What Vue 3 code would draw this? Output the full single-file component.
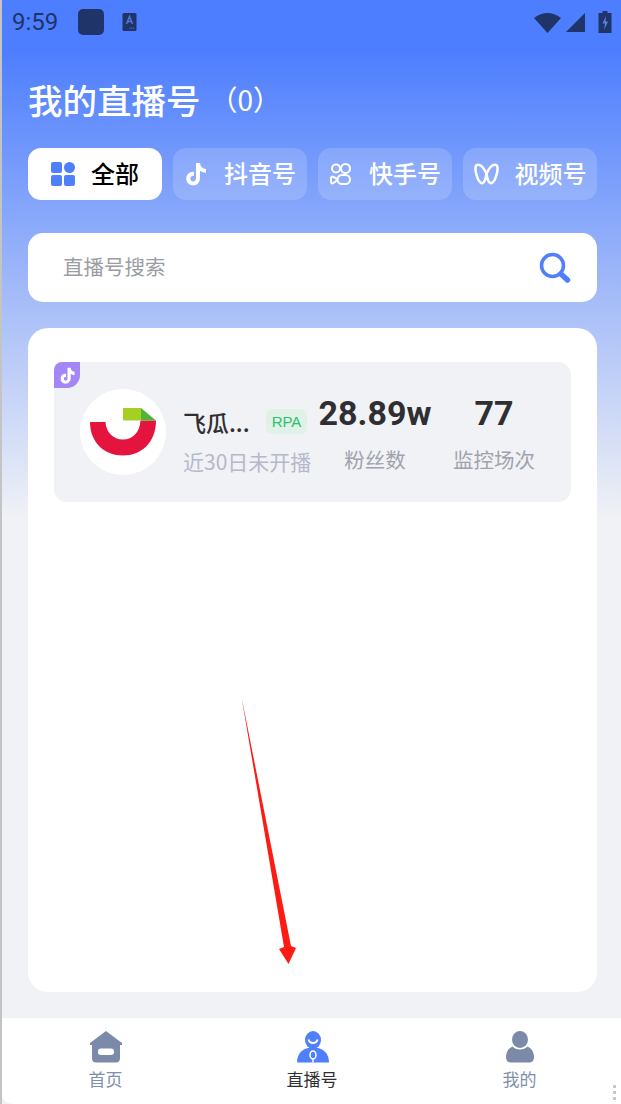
<template>
  <div class="page">
    <div class="status-bar">
      <span class="clock">9:59</span>
      <span class="app-dot"></span>
      <svg class="ime" viewBox="0 0 14 18" width="15" height="18">
        <rect width="14" height="18" rx="1.5" fill="#1f3468" />
        <path d="M4 11 L7 3.5 L10 11 M5.2 8.500 H8.800" fill="none" stroke="#4f78d8" stroke-width="1.500" />
        <path d="M7 15.200 H12" stroke="#4f78d8" stroke-width="1" stroke-dasharray="1 .8" />
      </svg>
      <div class="status-right">
        <svg class="wifi" viewBox="0 0 27 21" width="27" height="21">
          <path d="M0 6 Q13.500 -4 27 6 L13.500 21 Z" fill="#1f3468" />
        </svg>
        <svg class="signal" viewBox="0 0 19 19" width="19" height="19">
          <path d="M19 0 V19 H0 Z" fill="#1f3468" />
        </svg>
        <svg class="battery" viewBox="0 0 13 22" width="14" height="22">
          <path d="M4 2 V0 H9 V2 H13 V22 H0 V2 Z" fill="#1f3468" />
          <path d="M7.500 5 L4 12.500 H6.500 L5.500 19 L9.500 10.500 H7 Z" fill="#5a82e0" />
        </svg>
      </div>
    </div>

    <div class="title-row">
      <h1>我的直播号</h1>
      <span class="count">（0）</span>
    </div>

    <div class="tabs">
      <div
        v-for="tab in tabs"
        :key="tab.name"
        class="tab"
        :class="{ active: tab.active }"
      >
        <svg v-if="tab.icon === 'all'" viewBox="0 0 24 24" width="24" height="24">
          <rect width="11" height="11" rx="2" fill="#4f7ffb" />
          <circle cx="18.500" cy="5.500" r="5.500" fill="#4f7ffb" />
          <rect y="13" width="11" height="11" rx="2" fill="#4f7ffb" />
          <rect x="13" y="13" width="11" height="11" rx="2" fill="#4f7ffb" />
        </svg>
        <svg v-else-if="tab.icon === 'douyin'" viewBox="0 0 24 24" width="24" height="24">
          <path d="M12 1 H16 C16.300 4.800 18.500 6.800 22 7 V10.800 C19.700 10.700 17.800 10 16 8.800 V16 C16 20.500 13 23.500 9.300 23.500 C5.300 23.500 2.300 20.300 2.300 16.500 C2.300 12.300 5.800 9.300 10 9.700 V13.800 C8 13.400 6.300 14.700 6.300 16.500 C6.300 18.200 7.700 19.500 9.300 19.500 C10.900 19.500 12 18.200 12 16.300 Z" fill="#fff" />
        </svg>
        <svg v-else-if="tab.icon === 'kuaishou'" viewBox="0 0 24 24" width="24" height="24">
          <g fill="none" stroke="#fff" stroke-width="2">
            <circle cx="7" cy="6.500" r="4" />
            <circle cx="16.500" cy="6.500" r="4.500" />
            <rect x="8.500" y="13" width="12.500" height="9" rx="4.500" />
            <path d="M8.500 17.500 L4.500 14.800 C3 14 2 15 2 16.500 V19.500 C2 21 3 22 4.500 21 L8.500 18" stroke-linejoin="round" />
          </g>
        </svg>
        <svg v-else viewBox="0 0 26 24" width="25" height="24">
          <path d="M13 12 C10.500 6 7 2.500 4 2.500 C1.500 2.500 1 6 2 10.500 C3.300 16.500 5.800 21.500 8.500 21.500 C10.500 21.500 12 17.500 13 12 C14 17.500 15.500 21.500 17.500 21.500 C20.200 21.500 22.700 16.500 24 10.500 C25 6 24.500 2.500 22 2.500 C19 2.500 15.500 6 13 12 Z" fill="none" stroke="#fff" stroke-width="2.600" />
        </svg>
        <span>{{ tab.name }}</span>
      </div>
    </div>

    <div class="search">
      <span>直播号搜索</span>
      <svg viewBox="0 0 32 32" width="32" height="32">
        <circle cx="13.500" cy="13.500" r="11" fill="none" stroke="#4f7ffb" stroke-width="3.500" />
        <path d="M22 22 L28.500 28" stroke="#4f7ffb" stroke-width="5.500" stroke-linecap="round" />
      </svg>
    </div>

    <div class="panel">
      <div class="account">
        <div class="corner">
          <svg viewBox="0 0 24 24" width="17" height="17">
            <path d="M12 1 H16.500 C16.800 4.800 18.800 6.600 22 6.800 V11.200 C19.700 11.100 18 10.500 16.500 9.400 V16 C16.500 20.500 13.300 23.500 9.300 23.500 C5.300 23.500 2.300 20.300 2.300 16.500 C2.300 12.300 5.800 9.300 10 9.700 V14.200 C8.100 13.700 6.800 15 6.800 16.500 C6.800 18 8 19.200 9.400 19.200 C10.900 19.200 12 18 12 16.300 Z" fill="#fff" />
          </svg>
        </div>
        <div class="avatar">
          <svg viewBox="0 0 66 48" width="66" height="48">
            <path d="M0 14 H15.500 C16 24 23 31.500 33 31.500 C43 31.500 50 24 50.500 12.500 L66 12.500 C66 35 51 47.500 33 47.500 C15 47.500 0 35 0 14 Z" fill="#e5143f" />
            <rect x="33" y="0" width="18" height="12.500" fill="#a6cf24" />
            <path d="M51 0 L66 12.500 H51 Z" fill="#52b33a" />
          </svg>
        </div>
        <div class="info">
          <div class="name-row">
            <span class="name">飞瓜...</span>
            <span class="rpa">RPA</span>
          </div>
          <div class="sub">近30日未开播</div>
        </div>
        <div class="stat fans">
          <strong>28.89w</strong>
          <span>粉丝数</span>
        </div>
        <div class="stat watch">
          <strong>77</strong>
          <span>监控场次</span>
        </div>
      </div>
      <svg class="arrow" viewBox="0 0 60 275" width="60" height="275">
        <path d="M0.500 1 L50 250 L55 252 L47.500 268 L38 253 L43 251 Z" fill="#fc1c14" />
      </svg>
    </div>

    <nav class="tabbar">
      <div v-for="item in nav" :key="item.name" class="nav-item" :class="[item.icon, { current: item.current }]">
        <svg v-if="item.icon === 'home'" viewBox="0 0 32 32" width="32" height="32">
          <path d="M16 0 L32 12 V14 H30 V27 C30 30 28.500 31.500 26 31.500 H6 C3.500 31.500 2 30 2 27 V14 H0 V12 Z" fill="#7a8aa8" />
          <rect x="8" y="17.500" width="16" height="6.500" rx="3" fill="#fff" />
        </svg>
        <svg v-else-if="item.icon === 'live'" viewBox="0 0 32 32" width="32" height="32">
          <ellipse cx="16" cy="9" rx="8" ry="9" fill="#4f7ffb" />
          <path d="M11.500 8.500 C12.500 13 19.500 13 20.500 8.500" fill="none" stroke="#fff" stroke-width="2" />
          <path d="M0 31.500 C0 22 6 16.500 16 16.500 C26 16.500 32 22 32 31.500 Z" fill="#4f7ffb" />
          <ellipse cx="16" cy="24" rx="3" ry="4" fill="none" stroke="#fff" stroke-width="1.500" />
          <path d="M16 28 V31.500" stroke="#fff" stroke-width="1.500" />
        </svg>
        <svg v-else viewBox="0 0 32 32" width="32" height="32">
          <ellipse cx="16" cy="8.500" rx="8" ry="8.500" fill="#7a8aa8" />
          <path d="M2 26 C2 20.500 5 17 8.500 15.500 C12 19.500 20 19.500 23.500 15.500 C27 17 30 20.500 30 26 C30 30 28 31.500 25 31.500 H7 C4 31.500 2 30 2 26 Z" fill="#7a8aa8" />
        </svg>
        <span>{{ item.name }}</span>
      </div>
      <div class="handle">
        <i></i><i></i><i></i>
      </div>
    </nav>
  </div>
</template>

<script setup>
const tabs = [
  { name: '全部', icon: 'all', active: true },
  { name: '抖音号', icon: 'douyin' },
  { name: '快手号', icon: 'kuaishou' },
  { name: '视频号', icon: 'video' }
]

const nav = [
  { name: '首页', icon: 'home' },
  { name: '直播号', icon: 'live', current: true },
  { name: '我的', icon: 'me' }
]
</script>

<style>
html,
body {
  margin: 0;
  background: #f1f2f5;
}
</style>

<style scoped>
.page {
  width: 621px;
  height: 1104px;
  box-sizing: border-box;
  display: flex;
  flex-direction: column;
  overflow: hidden;
  font-family: "Noto Sans CJK SC", "Liberation Sans", sans-serif;
  background: linear-gradient(180deg, #4d7eff 0, #4d7eff 50px, #a9bff8 310px, #f1f2f5 520px);
  border-left: 2px solid #c4c4c4;
}

.status-bar {
  height: 44px;
  display: flex;
  align-items: center;
  padding: 0 9px 0 10px;
  color: #1f3468;
}

.clock {
  font-family: Roboto, sans-serif;
  font-size: 24px;
  width: 66px;
}

.app-dot {
  width: 26px;
  height: 26px;
  margin: 0 18px 0 0;
  border-radius: 5px;
  background: #1f3468;
}

.status-right {
  margin-left: auto;
  display: flex;
  align-items: center;
  gap: 5px;
}

.battery {
  margin-left: 8px;
}

.title-row {
  display: flex;
  align-items: center;
  margin: 28px 0 0 26px;
  height: 50px;
  padding-top: 4px;
  box-sizing: border-box;
  color: #fff;
}

h1 {
  margin: 0;
  font-size: 34.500px;
  font-weight: 500;
  line-height: 46px;
}

.count {
  font-size: 28px;
  margin-left: 9px;
}

.tabs {
  display: flex;
  gap: 11px;
  margin: 26px 24px 0 26px;
}

.tab {
  width: 134px;
  height: 52px;
  box-sizing: border-box;
  border-radius: 13px;
  display: flex;
  align-items: center;
  justify-content: center;
  gap: 16px;
  font-size: 24px;
  font-weight: 500;
  color: #fff;
  background: rgba(255, 255, 255, 0.16);
}

.tab span {
  padding-bottom: 4px;
}

.tab.active {
  background: #fff;
  color: #000;
}

.search {
  height: 69px;
  box-sizing: border-box;
  margin: 33px 24px 0 26px;
  padding: 0 26px 0 35px;
  border-radius: 15px;
  background: #fff;
  display: flex;
  align-items: center;
  justify-content: space-between;
  font-size: 20.500px;
  color: #9a9da3;
}

.search span {
  padding-bottom: 4px;
}

.panel {
  position: relative;
  height: 664px;
  box-sizing: border-box;
  margin: 26px 24px 0 26px;
  padding: 34px 26px 0;
  border-radius: 20px;
  background: #fff;
}

.account {
  position: relative;
  height: 140px;
  border-radius: 13px;
  background: #f1f2f5;
  display: flex;
  align-items: center;
  padding-left: 26px;
}

.corner {
  position: absolute;
  left: 0;
  top: 0;
  width: 26px;
  height: 26px;
  background: #a586f5;
  border-radius: 8px 0 13px 0;
  display: flex;
  align-items: center;
  justify-content: center;
}

.avatar {
  width: 86px;
  height: 86px;
  border-radius: 50%;
  background: #fff;
  display: flex;
  align-items: center;
  justify-content: center;
  flex-shrink: 0;
}

.info {
  margin-left: 17px;
  width: 135px;
  flex-shrink: 0;
  padding-top: 14px;
}

.name-row {
  display: flex;
  align-items: center;
  height: 38px;
}

.name {
  font-size: 23px;
  font-weight: 500;
  color: #2f2f33;
  width: 83px;
}

.rpa {
  width: 41px;
  height: 25px;
  border-radius: 6px;
  background: #e0f2e8;
  color: #2fbf71;
  font-family: "Liberation Sans", sans-serif;
  font-size: 15px;
  display: flex;
  align-items: center;
  justify-content: center;
}

.sub {
  font-size: 21px;
  line-height: 30px;
  margin-top: 5px;
  color: #b6b9cc;
  white-space: nowrap;
}

.stat {
  display: flex;
  flex-direction: column;
  align-items: center;
  flex-shrink: 0;
  padding-top: 6px;
}

.stat strong {
  font-family: Roboto, "Liberation Sans", sans-serif;
  font-size: 34px;
  line-height: 40px;
  color: #2f2f33;
}

.stat span {
  font-size: 20.500px;
  line-height: 36px;
  margin-top: 8px;
  color: #a0a3ad;
}

.fans {
  width: 114px;
}

.watch {
  width: 84px;
  margin-left: 20px;
}

.arrow {
  position: absolute;
  left: 213px;
  top: 368px;
}

.tabbar {
  position: relative;
  flex: 1;
  margin-top: 26px;
  background: #fff;
  border-bottom-left-radius: 10px;
  display: grid;
  grid-template-columns: 207px 206px 206px;
}

.nav-item {
  display: flex;
  flex-direction: column;
  align-items: center;
  padding-top: 13px;
  font-size: 17px;
  color: #7f8fa9;
}

.nav-item span {
  line-height: 26px;
  margin-top: 3px;
}

.nav-item.current {
  color: #2f2f33;
}

.live svg {
  margin-left: 2px;
}

.me {
  padding-left: 3px;
}

.handle {
  position: absolute;
  right: 5px;
  bottom: 4px;
  display: flex;
  flex-direction: column;
  gap: 3px;
}

.handle i {
  width: 3px;
  height: 3px;
  background: #c8c8c8;
}
</style>
